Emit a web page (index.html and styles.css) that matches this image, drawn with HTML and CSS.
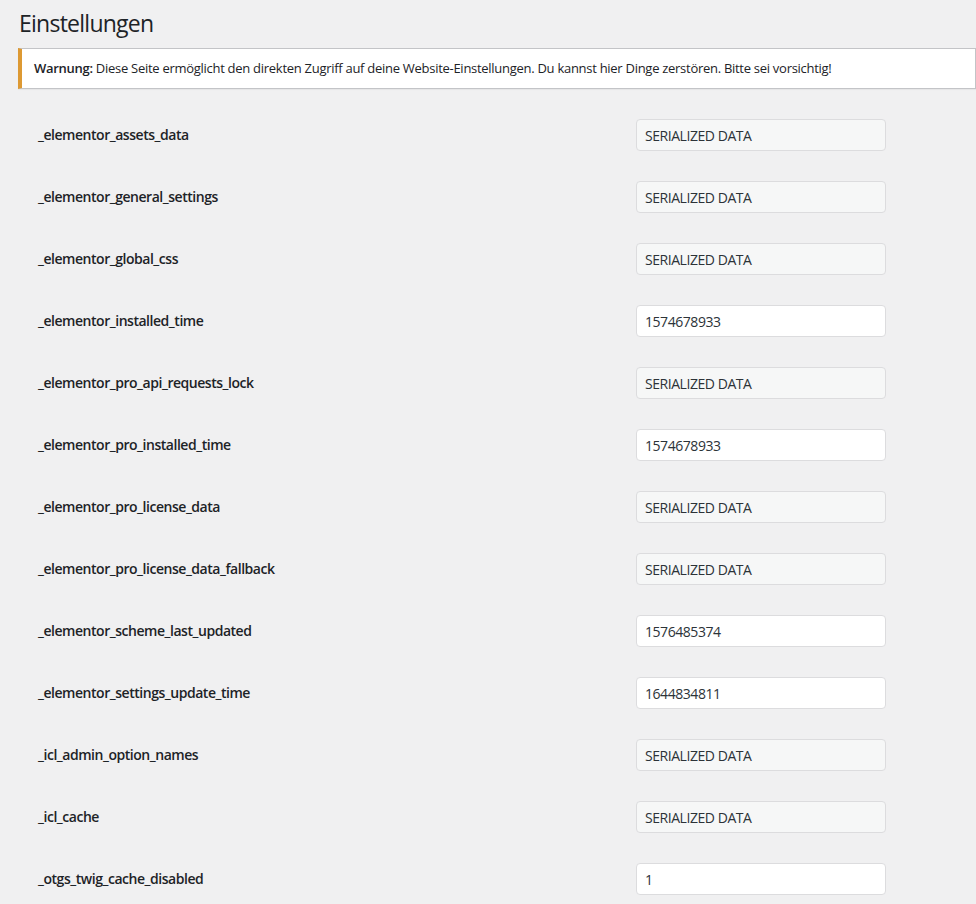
FILE: index.html
```html
<!DOCTYPE html>
<html lang="de">
<head>
    <meta charset="UTF-8">
    <meta name="viewport" content="width=device-width, initial-scale=1.0">
    <title>Einstellungen</title>
    <link rel="stylesheet" href="styles.css">
</head>
<body>
    <div class="wrap">
        <h1>Einstellungen</h1>

        <div class="notice notice-warning">
            <p><strong>Warnung:</strong> Diese Seite ermöglicht den direkten Zugriff auf deine Website-Einstellungen. Du kannst hier Dinge zerstören. Bitte sei vorsichtig!</p>
        </div>

        <form class="form-table">
            <div class="row">
                <label for="opt-1">_elementor_assets_data</label>
                <input type="text" id="opt-1" class="serialized" value="SERIALIZED DATA" disabled>
            </div>
            <div class="row">
                <label for="opt-2">_elementor_general_settings</label>
                <input type="text" id="opt-2" class="serialized" value="SERIALIZED DATA" disabled>
            </div>
            <div class="row">
                <label for="opt-3">_elementor_global_css</label>
                <input type="text" id="opt-3" class="serialized" value="SERIALIZED DATA" disabled>
            </div>
            <div class="row">
                <label for="opt-4">_elementor_installed_time</label>
                <input type="text" id="opt-4" value="1574678933">
            </div>
            <div class="row">
                <label for="opt-5">_elementor_pro_api_requests_lock</label>
                <input type="text" id="opt-5" class="serialized" value="SERIALIZED DATA" disabled>
            </div>
            <div class="row">
                <label for="opt-6">_elementor_pro_installed_time</label>
                <input type="text" id="opt-6" value="1574678933">
            </div>
            <div class="row">
                <label for="opt-7">_elementor_pro_license_data</label>
                <input type="text" id="opt-7" class="serialized" value="SERIALIZED DATA" disabled>
            </div>
            <div class="row">
                <label for="opt-8">_elementor_pro_license_data_fallback</label>
                <input type="text" id="opt-8" class="serialized" value="SERIALIZED DATA" disabled>
            </div>
            <div class="row">
                <label for="opt-9">_elementor_scheme_last_updated</label>
                <input type="text" id="opt-9" value="1576485374">
            </div>
            <div class="row">
                <label for="opt-10">_elementor_settings_update_time</label>
                <input type="text" id="opt-10" value="1644834811">
            </div>
            <div class="row">
                <label for="opt-11">_icl_admin_option_names</label>
                <input type="text" id="opt-11" class="serialized" value="SERIALIZED DATA" disabled>
            </div>
            <div class="row">
                <label for="opt-12">_icl_cache</label>
                <input type="text" id="opt-12" class="serialized" value="SERIALIZED DATA" disabled>
            </div>
            <div class="row">
                <label for="opt-13">_otgs_twig_cache_disabled</label>
                <input type="text" id="opt-13" value="1">
            </div>
        </form>
    </div>
</body>
</html>
```

FILE: styles.css
```css
* {
    margin: 0;
    padding: 0;
    box-sizing: border-box;
}

body {
    background-color: #f0f0f1;
    color: #1d2327;
    font-family: 'Open Sans', 'Noto Sans', sans-serif;
    font-size: 13px;
    line-height: 1.4;
}

.wrap {
    padding-left: 18px;
}

h1 {
    font-size: 23px;
    font-weight: 400;
    line-height: 1.3;
    letter-spacing: -0.75px;
    padding: 9px 0 4px 1px;
    color: #1d2327;
}

.notice {
    background: #fff;
    border: 1px solid #c3c4c7;
    border-left-width: 4px;
    box-shadow: 0 1px 1px rgba(0, 0, 0, 0.04);
    margin: 5px 0 15px;
    padding: 1px 12px;
}

.notice-warning {
    border-left-color: #dd9933;
}

.notice p {
    margin: 9px 0;
    font-size: 13px;
    line-height: 1.5;
    letter-spacing: -0.28px;
}

.notice strong {
    font-weight: 600;
}

.form-table {
    padding-left: 20px;
}

.row {
    display: grid;
    grid-template-columns: 598px 250px;
    align-items: start;
    height: 62px;
    padding-top: 15px;
}

.row label {
    font-size: 14px;
    font-weight: 600;
    line-height: 1.3;
    letter-spacing: -0.47px;
    padding-top: 7px;
    color: #1d2327;
}

.row input {
    width: 250px;
    height: 32px;
    padding: 0 8px;
    border: 1px solid #dcdcde;
    border-radius: 4px;
    background: #fff;
    color: #2c3338;
    font-family: inherit;
    font-size: 14px;
    letter-spacing: -0.45px;
}

.row input.serialized {
    background: #f6f7f7;
    color: #2c3338;
}
```
